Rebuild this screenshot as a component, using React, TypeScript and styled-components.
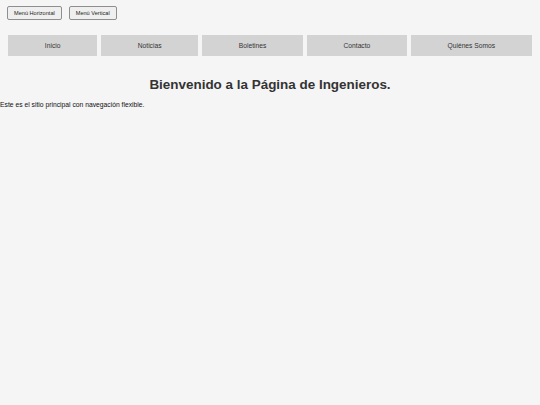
import React from 'react'
import styled, { createGlobalStyle } from 'styled-components'

const GlobalStyle = createGlobalStyle`
  html, body {
    margin: 0;
    padding: 0;
    background: #f5f5f5;
    font-family: 'Liberation Sans', Arial, sans-serif;
    color: #333;
  }
`

const Page = styled.div`
  min-height: 405px;
  background: #f5f5f5;
`

const Toolbar = styled.div`
  display: flex;
  gap: 7px;
  padding: 6px 7px 0;
`

const ToggleButton = styled.button`
  height: 14px;
  padding: 0 6px;
  font-family: 'Liberation Sans', Arial, sans-serif;
  font-size: 5.6px;
  color: #222;
  background: #efefef;
  border: 1px solid #8f8f8f;
  border-radius: 2px;
`

const Nav = styled.nav`
  display: flex;
  gap: 3.5px;
  margin: 15px 8px 0;
`

const NavItem = styled.a`
  flex: 1 1 auto;
  height: 21px;
  display: flex;
  align-items: center;
  justify-content: center;
  background: #d3d3d3;
  font-size: 6.7px;
  color: #333;
  text-decoration: none;
`

const Heading = styled.h1`
  margin: 21px 0 0;
  text-align: center;
  font-size: 13.45px;
  font-weight: bold;
  color: #333;
`

const Intro = styled.p`
  margin: 9px 0 0;
  font-size: 6.75px;
  color: #111;
`

const links = ['Inicio', 'Noticias', 'Boletines', 'Contacto', 'Quiénes Somos']

export default function App() {
  return (
    <Page>
      <GlobalStyle />
      <Toolbar>
        <ToggleButton>Menú Horizontal</ToggleButton>
        <ToggleButton>Menú Vertical</ToggleButton>
      </Toolbar>
      <Nav>
        {links.map((l) => (
          <NavItem key={l} href="#">
            {l}
          </NavItem>
        ))}
      </Nav>
      <Heading>Bienvenido a la Página de Ingenieros.</Heading>
      <Intro>Este es el sitio principal con navegación flexible.</Intro>
    </Page>
  )
}
